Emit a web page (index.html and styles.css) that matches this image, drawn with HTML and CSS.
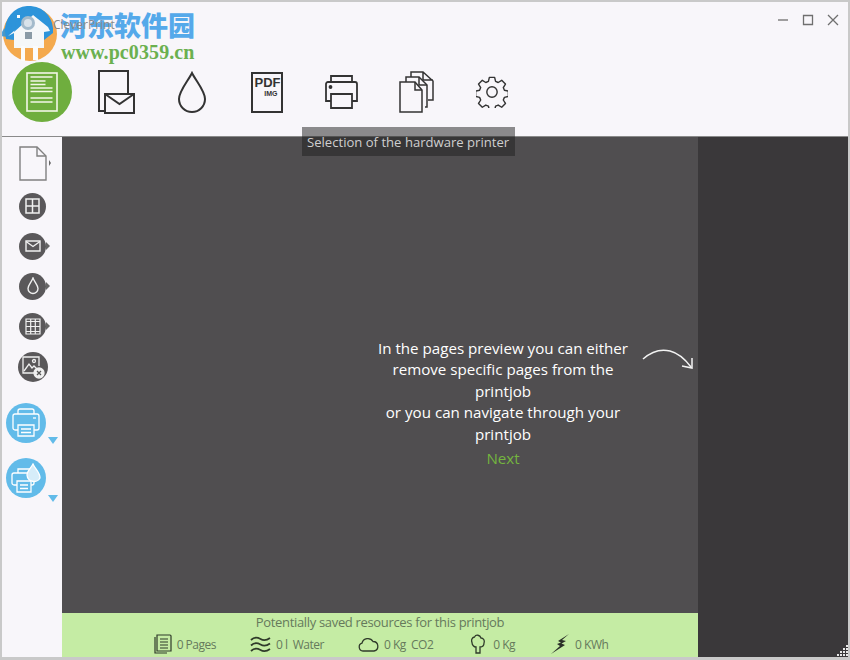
FILE: index.html
```html
<!DOCTYPE html>
<html lang="en">
<head>
<meta charset="utf-8">
<title>CleverPrint</title>
<link rel="stylesheet" href="styles.css">
</head>
<body>
<div class="window">
  <header class="header">
    <div class="titlebar">
      <span class="app-title">CleverPrint</span>
      <div class="controls">
        <svg width="12" height="12" viewBox="0 0 12 12"><path d="M1 6h10" class="ctl"/></svg>
        <svg width="12" height="12" viewBox="0 0 12 12"><path d="M1.500 1.500h9v9h-9z" class="ctl"/></svg>
        <svg width="12" height="12" viewBox="0 0 12 12"><path d="M1 1l10 10M11 1L1 11" class="ctl"/></svg>
      </div>
    </div>
    <nav class="toolbar">
      <div class="tool"><svg width="60" height="60" viewBox="0 0 60 60"><circle cx="30" cy="30" r="30" fill="#6fae3e"/><rect x="15" y="11" width="30" height="38" fill="none" stroke="#f3f6e8" stroke-width="1.600"/><g stroke="#f3f6e8" stroke-width="1.700"><path d="M18.500 15h22M18.500 19h15M18.500 22.500h15M18.500 26h22M18.500 29.500h22M18.500 36h22M18.500 40h22"/></g></svg></div>
      <div class="tool"><svg width="37" height="44" viewBox="0 0 37 44" class="line"><path d="M1 1h29v40H1z"/><path d="M7 24h29v19H7z" fill="#f8f6fa"/><path d="M7 24l14.500 10L36 24"/></svg></div>
      <div class="tool"><svg width="30" height="42" viewBox="0 0 30 42" class="line"><path d="M15 2C11 10 2 20 2 28a13 13 0 0 0 26 0C28 20 19 10 15 2z"/></svg></div>
      <div class="tool"><div class="pdf"><span class="pdf-big">PDF</span><span class="pdf-small">IMG</span></div></div>
      <div class="tool"><svg width="36" height="36" viewBox="0 0 36 36" class="line printer"><path d="M7 9V2h21v7"/><path d="M7 27H2V10a2 2 0 0 1 2-2h27a2 2 0 0 1 2 2v17h-5"/><path d="M7 20h21v14H7z"/><circle cx="6.500" cy="13" r="1" fill="#333"/></svg></div>
      <div class="tool"><svg width="36" height="42" viewBox="0 0 36 42" class="line thin"><path d="M12 6V1h12l10 9v19h-5M24 1v8h10"/><path d="M7 11V6h13l8 8v22h-2"/><path d="M20 6v8h8"/><path d="M1 11h15l7 8v22H1z" fill="#f8f6fa"/><path d="M16 11v8h7"/></svg></div>
      <div class="tool"><svg width="32" height="32" viewBox="0 0 34 34" class="line thin gear"><path d="M14.200 1.500h5.600l1 4.200 2.800 1.200 3.700-2.300 4 4-2.300 3.700 1.200 2.800 4.200 1v5.600l-4.200 1-1.200 2.800 2.300 3.700-4 4-3.700-2.300-2.800 1.200-1 4.200h-5.600l-1-4.200-2.800-1.200-3.700 2.300-4-4 2.300-3.700-1.200-2.800-4.200-1v-5.600l4.200-1 1.200-2.800-2.300-3.700 4-4 3.700 2.300 2.800-1.200z"/><circle cx="17" cy="17" r="5.500"/></svg></div>
    </nav>
  </header>
  <div class="body">
    <aside class="sidebar">
      <div class="side-item page-item">
        <svg width="28" height="35" viewBox="0 0 28 35" fill="none" stroke="#808080" stroke-width="1.400"><path d="M1 1h17l9 9v24H1z"/><path d="M18 1v9h9"/></svg>
        <span class="caret small"></span>
      </div>
      <div class="side-item"><span class="disc"><svg width="15" height="16" viewBox="0 0 15 16" fill="none" stroke="#f0f0f0" stroke-width="1.500"><path d="M1 1h13v14H1zM7.500 1v14M1 8h13"/></svg></span></div>
      <div class="side-item"><span class="disc"><svg width="16" height="12" viewBox="0 0 16 12" fill="none" stroke="#f0f0f0" stroke-width="1.400"><path d="M1 1h14v10H1z"/><path d="M1 1.500l7 5 7-5"/></svg></span><span class="caret"></span></div>
      <div class="side-item"><span class="disc"><svg width="12" height="18" viewBox="0 0 12 18" fill="none" stroke="#f0f0f0" stroke-width="1.400"><path d="M6 1C4.500 5 1 8 1 11.500a5 5 0 0 0 10 0C11 8 7.500 5 6 1z"/></svg></span><span class="caret"></span></div>
      <div class="side-item"><span class="disc"><svg width="16" height="17" viewBox="0 0 16 17" fill="none" stroke="#f0f0f0" stroke-width="1.200"><path d="M1 1h14v15H1zM1 3.500h14M1 13.500h14M5.700 1v15M10.300 1v15M1 8.500h14"/></svg></span><span class="caret"></span></div>
      <div class="side-item"><span class="disc big"><svg width="24" height="24" viewBox="0 0 24 24" fill="none" stroke="#f0f0f0" stroke-width="1.300"><path d="M13 18H2V2h16v9"/><path d="M3 16l5-7 3 4 2-2 3 3"/><circle cx="13" cy="6" r="1.500"/><circle cx="18" cy="18" r="5" fill="#f0f0f0"/><path d="M16 16l4 4M20 16l-4 4" stroke="#555"/></svg></span></div>
      <div class="side-item blue first-blue">
        <span class="blue-disc"><svg width="28" height="29" viewBox="0 0 28 29" fill="none" stroke="#fff" stroke-width="1.300"><path d="M6 6V3a2 2 0 0 1 2-2h12a2 2 0 0 1 2 2v3"/><path d="M6 22H3a2 2 0 0 1-2-2V8a2 2 0 0 1 2-2h22a2 2 0 0 1 2 2v12a2 2 0 0 1-2 2h-3"/><path d="M6 17h16v11H6zM9 21h10M9 24.500h10"/><path d="M21 10h3"/></svg></span>
        <span class="blue-caret"></span>
      </div>
      <div class="side-item blue">
        <span class="blue-disc"><svg width="30" height="30" viewBox="0 0 30 30" fill="none" stroke="#fff" stroke-width="1.300"><path d="M7 10V6h12v4"/><path d="M6 22H3a2 2 0 0 1-2-2v-8a2 2 0 0 1 2-2h18a2 2 0 0 1 2 2v8a2 2 0 0 1-2 2h-1"/><path d="M6 18h14v11H6zM9 22h8M9 25.500h8"/><path d="M22 1c-2 4-6 7-6 11a7 7 0 0 0 13 3c0-6-5-9-7-14z" fill="#d6edf9"/></svg></span>
        <span class="blue-caret low"></span>
      </div>
    </aside>
    <div class="center">
      <main class="preview">
        <div class="hint">
          <p class="hint-text">In the pages preview you can either<br>remove specific pages from the<br>printjob<br>or you can navigate through your<br>printjob</p>
          <a class="next">Next</a>
        </div>
        <svg class="arrow" width="52" height="20" viewBox="0 0 52 20" fill="none" stroke="#f3f3f3" stroke-width="1.500"><path d="M1 10C10 2 20 0 28 2c8 2 15 8 21 16"/><path d="M40 17l10 2 0-10"/></svg>
      </main>
      <footer class="savings">
        <div class="savings-title">Potentially saved resources for this printjob</div>
        <div class="savings-row">
          <div class="stat"><svg width="18" height="20" viewBox="0 0 18 20" fill="none" stroke="#2f3a2a" stroke-width="1.200"><path d="M1 3v16h12"/><path d="M3 1h13a1 1 0 0 1 1 1v15H3z"/><path d="M6 5h8M6 8h8M6 11h8M6 14h8"/></svg><span>0 Pages</span></div>
          <div class="stat"><svg width="21" height="17" viewBox="0 0 21 17" fill="none" stroke="#2f3a2a" stroke-width="1.800"><path d="M1 4c3-3 6-3 9.500-1s6 1.500 9.500-1M1 9.500c3-3 6-3 9.500-1s6 1.500 9.500-1M1 15c3-3 6-3 9.500-1s6 1.500 9.500-1"/></svg><span>0 l&nbsp; Water</span></div>
          <div class="stat"><svg width="21" height="15" viewBox="0 0 21 15" fill="none" stroke="#2f3a2a" stroke-width="1.300"><path d="M5 14a4 4 0 0 1-1-7.800A6 6 0 0 1 15 4.500a4.800 4.800 0 0 1 1 9.500z"/></svg><span>0 Kg&nbsp; CO2</span></div>
          <div class="stat tree"><svg width="14" height="20" viewBox="0 0 14 20" fill="none" stroke="#2f3a2a" stroke-width="1.300"><path d="M5 19h4v-6c3 0 4-2 4-4 1-3-1-5-3-5C9 1 5 0 3.500 3 1 3.500 0 6 1 8.500 1 11 3 13 5 13z"/></svg><span>0 Kg</span></div>
          <div class="stat"><svg width="19" height="20" viewBox="0 0 19 20"><path d="M18 0L7 7l3 1.500L6 10l3 2L0 20l14-9-3.500-1.500L15 7l-4-1z" fill="#2a2f28"/></svg><span>0 KWh</span></div>
        </div>
      </footer>
    </div>
    <div class="rightpane">
      <svg class="grip" width="12" height="12" viewBox="0 0 12 12" fill="#e8e8e8"><path d="M10 0h2v2h-2zM7 3h2v2H7zM10 3h2v2h-2zM4 6h2v2H4zM7 6h2v2H7zM10 6h2v2h-2zM1 9h2v2H1zM4 9h2v2H4zM7 9h2v2H7zM10 9h2v2h-2z"/></svg>
    </div>
  </div>
  <div class="tooltip">Selection of the hardware printer</div>
  <div class="watermark">
    <svg class="wm-logo" width="58" height="58" viewBox="0 0 58 58">
      <circle cx="30" cy="28" r="27" fill="#f4a94e"/>
      <path d="M5 26A24 24 0 0 1 53 22V27L44 34H14L6 33z" fill="#2d94da"/>
      <path d="M0 30C2 24 6 20 12 17L8 31z" fill="#2d94da" opacity=".85"/>
      <path d="M8 30L33 9 48 21 50 25 44 26V42H14V27z" fill="#f5f7f9"/>
      <path d="M16 16L33 9 14 26z" fill="#2d94da"/>
      <path d="M21 40h4v15h-4zM33 40h5v14h-5z" fill="#fbfbfb"/>
      <circle cx="28" cy="17" r="7" fill="#a3bacb"/>
      <circle cx="28" cy="17" r="4" fill="#d8e2ea"/>
      <path d="M25 26h7v7h-7z" fill="#8a9aa6"/>
      <path d="M17 9h3v3h-3z" fill="#fff"/>
    </svg>
    <div class="wm-cn">河东软件园</div>
    <div class="wm-url">www.pc0359.cn</div>
  </div>
</div>
</body>
</html>
```
FILE: styles.css
```css
* { box-sizing: border-box; }
html, body { margin: 0; height: 100%; }
body { font-family: "Open Sans", "Liberation Sans", sans-serif; background: #f8f6fa; }
.window {
  position: relative;
  width: 850px;
  height: 660px;
  border: 2px solid #c9c9c9;
  border-bottom-width: 3px;
  display: flex;
  flex-direction: column;
  overflow: hidden;
  background: #f8f6fa;
}
.header { height: 135px; flex: none; border-bottom: 1px solid #8a8a8a; }
.titlebar { height: 60px; display: flex; justify-content: space-between; padding: 11px 9px 0 51px; }
.app-title { position: relative; z-index: 2; font-size: 12px; line-height: 22px; padding-top: 1px; color: #8a8a8a; }
.controls { display: flex; gap: 13px; height: 12px; margin-top: 1px; }
.ctl { fill: none; stroke: #6f6f6f; stroke-width: 1.300; }
.toolbar { display: flex; padding-left: 2px; height: 60px; }
.tool { width: 75px; height: 60px; display: flex; align-items: center; justify-content: center; }
.line { fill: none; stroke: #333; stroke-width: 2; }
.thin { stroke-width: 1.500; }
.printer { stroke-width: 1.800; }
.gear { stroke-linejoin: round; }
.pdf {
  width: 32px;
  height: 41px;
  border: 2px solid #333;
  display: flex;
  flex-direction: column;
  padding: 2px 0 0 2px;
  font-family: "Liberation Sans", sans-serif;
  font-weight: 700;
  color: #333;
  line-height: 1;
}
.pdf-big { font-size: 13px; letter-spacing: 0; }
.pdf-small { font-size: 7px; align-self: flex-end; margin: 1px 3px 0 0; }
.body { flex: 1; display: flex; min-height: 0; }
.sidebar { width: 60px; flex: none; display: flex; flex-direction: column; align-items: flex-start; padding-top: 8px; }
.side-item { display: flex; align-items: center; height: 40px; width: 60px; padding-left: 17px; position: relative; }
.page-item { height: 36px; margin-bottom: 5px; }
.disc { width: 27px; height: 27px; border-radius: 50%; background: #5a585a; display: flex; align-items: center; justify-content: center; flex: none; }
.disc.big { width: 30px; height: 30px; margin-left: -1px; margin-top: 2px; }
.caret { width: 0; height: 0; border-left: 4px solid #666; border-top: 4px solid transparent; border-bottom: 4px solid transparent; flex: none; }
.caret.small { border-left-width: 2px; border-top-width: 3px; border-bottom-width: 3px; margin-left: 2px; }
.blue { height: 55px; padding-left: 4px; }
.first-blue { margin-top: 9px; }
.blue-disc { width: 40px; height: 40px; border-radius: 50%; background: #62bbe9; display: flex; align-items: center; justify-content: center; flex: none; }
.blue-caret { width: 0; height: 0; border-top: 7px solid #62bbe9; border-left: 5px solid transparent; border-right: 5px solid transparent; flex: none; margin: 35px 0 0 2px; }
.blue-caret.low { margin-top: 41px; }
.center { width: 636px; flex: none; display: flex; flex-direction: column; }
.preview { flex: 1; min-height: 0; background: #504e50; display: flex; align-items: center; justify-content: flex-end; padding: 0 4px 0 0; }
.hint { width: 270px; text-align: center; color: #fff; font-size: 15.150px; margin: 0 4px 0 0; padding-top: 57px; }
.hint-text { margin: 0; line-height: 21.600px; }
.next { display: block; color: #74b53f; margin-top: 2px; line-height: 22px; }
.arrow { flex: none; margin-bottom: 33px; }
.savings { height: 44px; flex: none; background: #c5eca4; color: #667a5c; }
.savings-title { text-align: center; font-size: 13px; line-height: 18px; letter-spacing: -0.330px; }
.savings-row { display: flex; justify-content: center; gap: 34px; height: 26px; align-items: center; font-size: 12px; letter-spacing: -0.500px; padding-left: 2px; }
.stat { display: flex; align-items: center; gap: 5px; }
.tree { gap: 8px; margin: 0 2px 0 4px; }
.rightpane { flex: 1; background: #3a383a; position: relative; }
.grip { position: absolute; right: 0; bottom: 0; }
.tooltip {
  position: absolute;
  left: 300px;
  top: 125px;
  width: 213px;
  height: 29px;
  background: rgba(30, 30, 30, .5);
  color: #cfcfcf;
  font-size: 13.100px;
  line-height: 30px;
  padding-left: 5px;
  white-space: nowrap;
}
.watermark { position: absolute; left: -2px; top: 4px; width: 200px; height: 60px; }
.wm-logo { position: absolute; left: 0; top: 0; }
.wm-cn { position: absolute; left: 60px; top: 0; font-family: "Noto Sans CJK SC", sans-serif; font-weight: 900; font-size: 27px; line-height: 38px; color: #55a9ea; white-space: nowrap; }
.wm-url { position: absolute; left: 61px; top: 35px; font-family: "Liberation Serif", serif; font-weight: 700; font-size: 20px; line-height: 22px; letter-spacing: .1px; color: #6bb04f; white-space: nowrap; }
```
